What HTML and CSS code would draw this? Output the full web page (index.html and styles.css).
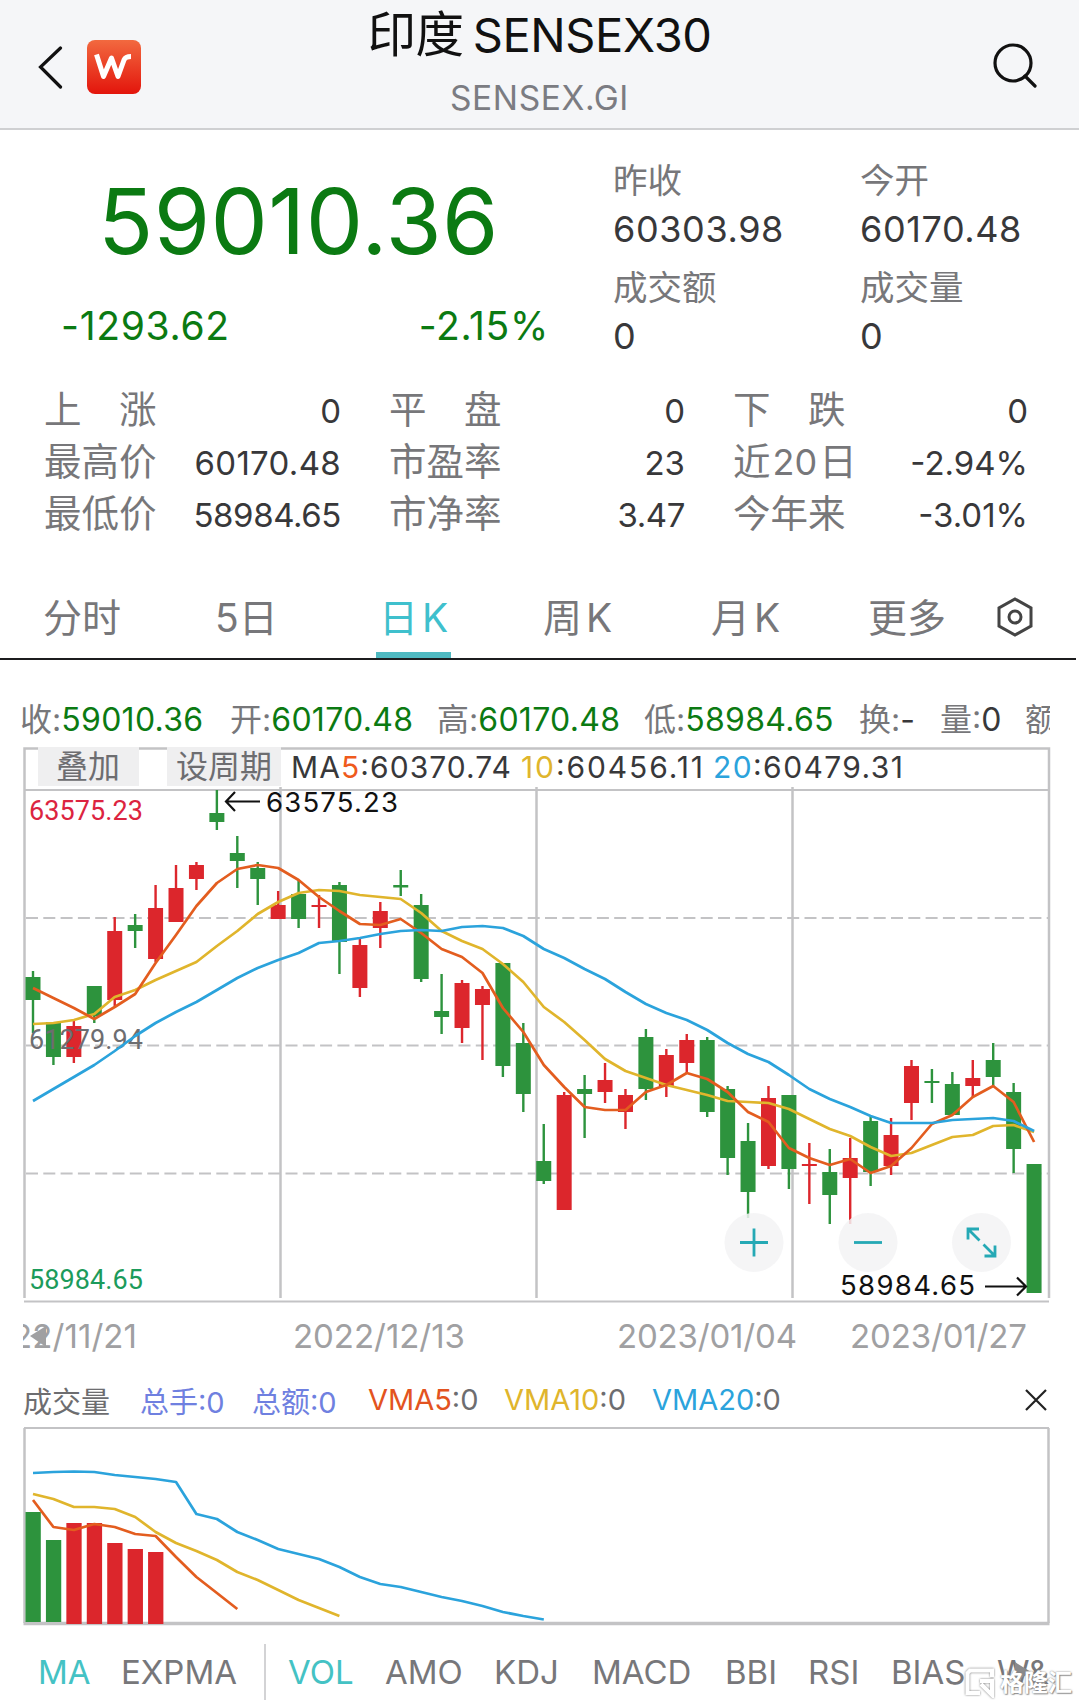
FILE: index.html
```
<!DOCTYPE html>
<html lang="zh-CN">

<head>
    <meta charset="UTF-8" />
    <meta name="viewport" content="width=device-width, initial-scale=1.0" />
    <title>印度SENSEX30</title>
    <link rel="stylesheet" href="styles.css">
</head>

<body>
    <header class="header">
        <div class="header-left">
            <svg class="back" width="26" height="44" viewBox="0 0 26 44">
                <path d="M22.500 3 L2.500 22 L22.500 42" />
            </svg>
            <svg class="logo" width="56" height="56" viewBox="0 0 56 56">
                <defs>
                    <linearGradient id="logo-bg" x1="0" y1="0" x2="0" y2="1">
                        <stop offset="0" stop-color="#f2693f" />
                        <stop offset="1" stop-color="#e3150c" />
                    </linearGradient>
                </defs>
                <rect x="1" y="1" width="54" height="54" rx="8" fill="url(#logo-bg)" />
                <path class="logo-mark" d="M10.500 15.500 L17.500 37.500 L25.500 19 L32 37.500 L38 21 Q39.500 17.500 45 17.500" />
            </svg>
        </div>
        <div class="header-title">
            <h1><span class="cjk">印度</span>SENSEX30</h1>
            <p>SENSEX.GI</p>
        </div>
        <svg class="search" width="46" height="46" viewBox="0 0 46 46">
            <circle cx="21" cy="21" r="18" />
            <path d="M33 34 L43 44" />
        </svg>
    </header>

    <section class="quote">
        <div class="quote-main">
            <div class="price">59010.36</div>
            <div class="change"><span>-1293.62</span><span>-2.15%</span></div>
        </div>
        <dl class="quote-side">
            <div><dt>昨收</dt><dd>60303.98</dd></div>
            <div><dt>今开</dt><dd>60170.48</dd></div>
            <div><dt>成交额</dt><dd>0</dd></div>
            <div><dt>成交量</dt><dd>0</dd></div>
        </dl>
    </section>

    <section class="stats">
        <div class="stat"><span>上　涨</span><b>0</b></div>
        <div class="stat"><span>平　盘</span><b>0</b></div>
        <div class="stat"><span>下　跌</span><b>0</b></div>
        <div class="stat"><span>最高价</span><b class="loose">60170.48</b></div>
        <div class="stat"><span>市盈率</span><b>23</b></div>
        <div class="stat"><span>近<i>20</i>日</span><b>-2.94%</b></div>
        <div class="stat"><span>最低价</span><b class="tight">58984.65</b></div>
        <div class="stat"><span>市净率</span><b class="tight">3.47</b></div>
        <div class="stat"><span>今年来</span><b>-3.01%</b></div>
    </section>

    <nav class="tabs">
        <span>分时</span>
        <span>5日</span>
        <span class="active">日<i>K</i></span>
        <span>周<i>K</i></span>
        <span>月<i>K</i></span>
        <span>更多</span>
        <svg width="36" height="40" viewBox="0 0 36 40">
            <path d="M18 2 L34 11 V29 L18 38 L2 29 V11 Z" />
            <circle cx="18" cy="20" r="6" />
        </svg>
    </nav>

    <div class="ohlc">
        <span>收:<b>59010.36</b></span>
        <span>开:<b>60170.48</b></span>
        <span>高:<b>60170.48</b></span>
        <span>低:<b>58984.65</b></span>
        <span>换:<em>-</em></span>
        <span>量:<em>0</em></span>
        <span>额</span>
    </div>

    <svg class="chart" width="1079" height="630" viewBox="0 740 1079 630">
        <defs>
            <clipPath id="date-clip"><rect x="23" y="1310" width="1027" height="50" /></clipPath>
        </defs>
        <!-- grid -->
        <g class="grid">
            <path class="thick" d="M24.500 1298 V748.500 H1049 V1298 M280.500 787 V1298 M536.500 787 V1298 M792.500 787 V1298" />
            <path d="M24 790 H1049 M24 1301.500 H1049" />
            <path class="dashed" d="M26 918 H1048 M26 1045.500 H1048 M26 1173.500 H1048" />
        </g>
        <rect class="chip" x="38" y="747" width="101" height="39" />
        <rect class="chip" x="167" y="747" width="114" height="39" />
        <text class="chip-text" x="56" y="778">叠加</text>
        <text class="chip-text" x="176" y="778">设周期</text>
        <text class="ma-text" x="291" y="778" textLength="220">MA<tspan class="c5">5</tspan>:60370.74</text>
        <text class="ma-text" x="521" y="778" textLength="182"><tspan class="c10">10</tspan>:60456.11</text>
        <text class="ma-text" x="713" y="778" textLength="190"><tspan class="c20">20</tspan>:60479.31</text>

        <g id="candles"></g>
        <text class="axis up" x="29" y="820" textLength="114">63575.23</text>
        <text class="axis mid" x="29" y="1049" textLength="114">61279.94</text>
        <text class="axis down" x="29" y="1289" textLength="114">58984.65</text>
        <g id="ma-lines" class="lines"></g>

        <text class="mark" x="266" y="812" textLength="132">63575.23</text>
        <path class="arrow" d="M260 801.500 H226 M235 792 L226 801.500 L235 811" />

        <!-- zoom buttons -->
        <g class="zoom-btn">
            <circle cx="754" cy="1242.500" r="29.500" />
            <path d="M740 1242.500 H768 M754 1228.500 V1256.500" />
        </g>
        <g class="zoom-btn">
            <circle cx="868" cy="1242.500" r="29.500" />
            <path d="M854 1242.500 H882" />
        </g>
        <g class="zoom-btn">
            <circle cx="981.500" cy="1242.500" r="29.500" />
            <path d="M968 1239.500 V1229 H979 M968 1229 L979.500 1240.500 M995 1245.500 V1256 H984.500 M995 1256 L983.500 1244.500" />
        </g>
        <text class="mark" x="840" y="1295" textLength="135">58984.65</text>
        <path class="arrow" d="M985 1286.500 H1026 M1017 1277.500 L1026 1286.500 L1017 1295.500" />

        <g class="dates" clip-path="url(#date-clip)">
            <text x="-29" y="1348" textLength="166">2022/11/21</text>
            <text x="293" y="1348" textLength="172">2022/12/13</text>
            <text x="617" y="1348" textLength="180">2023/01/04</text>
            <text x="850" y="1348" textLength="177">2023/01/27</text>
            <path d="M30 1336 L46 1326 V1347 Z" />
        </g>
    </svg>

    <div class="vol-head">
        <span>成交量</span>
        <span class="total">总手:0</span>
        <span class="total">总额:0</span>
        <span><b class="c5">VMA5</b>:0</span>
        <span><b class="c10">VMA10</b>:0</span>
        <span><b class="c20">VMA20</b>:0</span>
        <svg width="22" height="22" viewBox="0 0 22 22">
            <path d="M1 1 L21 21 M21 1 L1 21" />
        </svg>
    </div>

    <svg class="chart" width="1079" height="204" viewBox="0 1424 1079 204">
        <g class="grid">
            <path d="M24 1428 H1049" />
            <path class="thick" d="M24.500 1428 V1623 M1048.500 1428 V1623" />
            <path class="base" d="M23.500 1623.500 H1049.500" />
        </g>
        <g id="volumes"></g>
        <g id="vma-lines" class="lines"></g>
    </svg>

    <footer class="indicators">
        <span class="active">MA</span>
        <span>EXPMA</span>
        <span class="divider"></span>
        <span class="active">VOL</span>
        <span>AMO</span>
        <span>KDJ</span>
        <span>MACD</span>
        <span>BBI</span>
        <span>RSI</span>
        <span>BIAS</span>
        <span>W&amp;</span>
        <svg class="more" width="18" height="22" viewBox="0 0 18 22">
            <path d="M1 1 L17 11 L1 21 Z" />
        </svg>
        <div class="watermark">
            <svg width="30" height="30" viewBox="0 0 30 30">
                <path d="M27 9 V2.500 H5 L2.500 5 V25 H15 M15 13 H27 V27 L16 16" />
            </svg>
            <span>格隆汇</span>
        </div>
    </footer>

    <script>
        const NS = 'http://www.w3.org/2000/svg';
        const STEP = 20.43;
        const RED = '#dc262c';
        const GREEN = '#2d933d';

        // [colour, high, body top, body bottom, low]
        const candles = [
            ['g', 971, 977, 1000, 1033], ['g', 1022, 1022, 1057, 1065], ['r', 1021, 1026, 1057, 1063],
            ['g', 986, 986, 1016, 1023], ['r', 917, 931, 1000, 1006], ['g', 914, 925, 931, 948],
            ['r', 885, 908, 959, 962], ['r', 865, 888, 922, 922], ['r', 862, 865, 879, 890],
            ['g', 790, 813, 822, 830], ['g', 836, 853, 861, 888], ['g', 862, 868, 879, 905],
            ['r', 891, 905, 919, 919], ['g', 880, 894, 919, 928], ['r', 895, 905, 907, 928],
            ['g', 882, 885, 942, 974], ['r', 938, 945, 988, 997], ['r', 902, 911, 928, 948],
            ['g', 870, 885, 887.5, 896], ['g', 894, 905, 979, 982], ['g', 974, 1011, 1017, 1034],
            ['r', 980, 983, 1028, 1043], ['r', 986, 989, 1005, 1060], ['g', 963, 963, 1066, 1077],
            ['g', 1023, 1043, 1094, 1112], ['g', 1124, 1161, 1181, 1184], ['r', 1092, 1095, 1210, 1210],
            ['g', 1075, 1089, 1094, 1138], ['r', 1063, 1080, 1092, 1103], ['r', 1089, 1095, 1112, 1129],
            ['g', 1029, 1037, 1089, 1100], ['r', 1049, 1055, 1086, 1097], ['r', 1034, 1040, 1063, 1073],
            ['g', 1037, 1040, 1112, 1117], ['g', 1086, 1089, 1158, 1175], ['g', 1123, 1141, 1192, 1218],
            ['r', 1086, 1098, 1166, 1169], ['g', 1095, 1095, 1169, 1189], ['r', 1143, 1164, 1166, 1204],
            ['g', 1149, 1172, 1195, 1224], ['r', 1138, 1158, 1178, 1224], ['g', 1117, 1121, 1172, 1186],
            ['r', 1118, 1135, 1166, 1175], ['r', 1060, 1066, 1103, 1120], ['g', 1069, 1081, 1083, 1103],
            ['g', 1072, 1084, 1115, 1115], ['r', 1060, 1078, 1086, 1097], ['g', 1043, 1060, 1077, 1086],
            ['g', 1083, 1092, 1149, 1173], ['g', 1164, 1164, 1293, 1293]
        ];

        const ma20 = [1101, 1089, 1077, 1065, 1051, 1036, 1023, 1012, 1002, 990, 978, 968, 960, 953, 943, 941, 938, 934, 931, 930, 931, 927, 926, 928, 936, 949, 958, 969, 979, 992, 1004, 1013, 1020, 1030, 1043, 1054, 1062, 1075, 1089, 1099, 1107, 1116, 1123, 1123, 1123, 1120, 1119, 1118, 1121, 1131];
        const ma10 = [1024, 1023, 1020, 1014, 997, 990, 980, 971, 962, 946, 931, 914, 902, 893, 890, 891, 895, 897, 899, 913, 931, 941, 949, 964, 982, 1007, 1022, 1040, 1059, 1071, 1078, 1085, 1090, 1095, 1101, 1102, 1103, 1109, 1119, 1129, 1136, 1147, 1156, 1153, 1145, 1137, 1135, 1126, 1125, 1132];
        const ma5 = [988, 998, 1008, 1019, 1007, 994, 963, 935, 906, 883, 869, 865, 868, 880, 897, 911, 924, 925, 919, 933, 949, 957, 973, 1008, 1032, 1065, 1087, 1107, 1110, 1110, 1092, 1085, 1073, 1079, 1092, 1112, 1122, 1148, 1158, 1165, 1159, 1173, 1166, 1148, 1124, 1115, 1097, 1086, 1102, 1142];

        const volumes = [['g', 1512], ['g', 1540], ['r', 1523], ['r', 1523], ['r', 1543], ['r', 1549], ['r', 1552]];
        const vma20 = [1473, 1472, 1471.5, 1472, 1475, 1477, 1479, 1482, 1514, 1519, 1532, 1540, 1549, 1554, 1559, 1567, 1577, 1584, 1587, 1592, 1597, 1601, 1606, 1612, 1616, 1619.5];
        const vma10 = [1494, 1499, 1507, 1507, 1509, 1517, 1532, 1543, 1551, 1560, 1572, 1580, 1590, 1600, 1608, 1616];
        const vma5 = [1500, 1527, 1530, 1524, 1527, 1534, 1536, 1557, 1577, 1593, 1609];

        function xAt(i) {
            return 33 + i * STEP;
        }

        function add(parent, tag, attrs) {
            const el = document.createElementNS(NS, tag);
            for (const key in attrs) el.setAttribute(key, attrs[key]);
            document.getElementById(parent).appendChild(el);
        }

        function line(parent, data, color) {
            const points = data.map((y, i) => xAt(i).toFixed(1) + ',' + y).join(' ');
            add(parent, 'polyline', { points: points, stroke: color });
        }

        candles.forEach(([c, high, top, bottom, low], i) => {
            const fill = c === 'r' ? RED : GREEN;
            add('candles', 'rect', { x: xAt(i) - 1.2, y: high, width: 2.4, height: low - high, fill: fill });
            add('candles', 'rect', { x: xAt(i) - 7.5, y: top, width: 15, height: bottom - top, fill: fill });
        });
        line('ma-lines', ma10, '#e0b52c');
        line('ma-lines', ma5, '#e35d1f');
        line('ma-lines', ma20, '#2ba3dc');

        volumes.forEach(([c, top], i) => {
            const bottom = c === 'r' ? 1624 : 1622;
            add('volumes', 'rect', { x: xAt(i) - 7.5, y: top, width: 15.3, height: bottom - top, fill: c === 'r' ? RED : GREEN });
        });
        line('vma-lines', vma20, '#2ba3dc');
        line('vma-lines', vma10, '#e0b52c');
        line('vma-lines', vma5, '#e35d1f');
    </script>
</body>

</html>
```
FILE: styles.css
```
* {
    box-sizing: border-box;
}

body {
    margin: 0;
    width: 1079px;
    height: 1708px;
    overflow: hidden;
    background: #fff;
    font-family: Inter, "Noto Sans CJK SC", sans-serif;
    font-weight: 400;
    color: #38383a;
}

h1, p, dl, dd {
    margin: 0;
}

b, i, em {
    font-weight: inherit;
    font-style: normal;
}

svg {
    display: block;
    fill: none;
}

/* header */
.header {
    display: grid;
    grid-template-columns: 200px 1fr 200px;
    height: 130px;
    background: #f5f6f8;
    border-bottom: 2px solid #cfd0d2;
}

.header-left {
    display: flex;
    align-items: center;
    gap: 22px;
    padding: 5px 0 0 38px;
}

.back path,
.search circle,
.search path {
    stroke: #111;
    stroke-width: 3.2;
    stroke-linecap: round;
}

.logo-mark {
    stroke: #fff;
    stroke-width: 5;
    stroke-linejoin: round;
}

.header-title {
    text-align: center;
    white-space: nowrap;
}

.header-title h1 {
    padding-top: 5px;
    font-size: 47px;
    font-weight: 400;
    line-height: 60px;
    letter-spacing: -0.4px;
    color: #111;
}

.header-title .cjk {
    margin-right: 9px;
    font-size: 48.5px;
}

.header-title p {
    padding-top: 13px;
    font-size: 33.5px;
    line-height: 40px;
    letter-spacing: 0.6px;
    color: #7b7c82;
}

.search {
    justify-self: end;
    margin: 42px 41px 0 0;
}

/* quote */
.quote {
    display: grid;
    grid-template-columns: 613px 1fr;
    height: 252px;
}

.price {
    padding: 36px 0 0 98px;
    font-size: 91px;
    line-height: 110px;
    letter-spacing: 0.4px;
    color: #0b7a12;
}

.change {
    display: flex;
    justify-content: space-between;
    padding: 26px 64px 0 61px;
    font-size: 39px;
    line-height: 48px;
    letter-spacing: 0.7px;
    color: #0b7a12;
}

.quote-side {
    display: grid;
    grid-template-columns: 247px 1fr;
    grid-template-rows: 107px 107px;
    padding-top: 28px;
}

.quote-side dt {
    font-size: 34.5px;
    line-height: 46px;
    color: #77777a;
}

.quote-side dd {
    font-size: 36px;
    line-height: 51px;
    letter-spacing: 0.6px;
}

/* stats */
.stats {
    display: grid;
    grid-template-columns: 297px 296px 295px;
    column-gap: 48px;
    grid-auto-rows: 52px;
    height: 190px;
    padding: 2px 0 0 44px;
}

.stat {
    display: flex;
    justify-content: space-between;
    line-height: 52px;
    white-space: nowrap;
}

.stat span {
    font-size: 37.5px;
    color: #77777a;
}

.stat span i {
    margin: 0 2px;
    font-size: 36px;
}

.stat b {
    padding-top: 1px;
    font-size: 33px;
}

.stat .loose {
    letter-spacing: 0.3px;
}

.stat .tight {
    letter-spacing: -0.4px;
}

/* period tabs */
.tabs {
    display: grid;
    grid-template-columns: 172px 161px 167px 168px 157px 130px 1fr;
    width: 1076px;
    height: 88px;
    padding-left: 43px;
    border-bottom: 2px solid #1c1c1e;
    font-size: 39px;
    line-height: 91px;
    white-space: nowrap;
    color: #77777a;
}

.tabs i {
    margin-left: 4px;
}

.tabs .active {
    justify-self: start;
    padding-left: 3px;
    width: 75px;
    height: 86px;
    border-bottom: 6px solid #4fb9c1;
    color: #3fc0cd;
}

.tabs svg {
    margin: 25px 0 0 -1px;
    stroke: #444;
    stroke-width: 3;
}

/* open / high / low / close */
.ohlc {
    display: grid;
    grid-template-columns: 210px 207px 207px 215px 81px 85px 1fr;
    height: 80px;
    width: 1050px;
    padding: 31px 0 0 20px;
    overflow: hidden;
    font-size: 32px;
    line-height: 58px;
    white-space: nowrap;
    color: #77777a;
}

.ohlc b {
    letter-spacing: 0.3px;
    color: #0b7a12;
}

.ohlc em {
    color: #38383a;
}

/* charts */
.grid path {
    stroke: #c3c3c5;
    stroke-width: 1.8;
}

.grid .thick {
    stroke-width: 2.5;
}

.grid .base {
    stroke-width: 3.5;
}

.grid .dashed {
    stroke-dasharray: 12 5.300;
}

.chip {
    fill: #efeff0;
}

.chip-text {
    font-size: 32px;
    fill: #6d6d70;
}

.ma-text {
    font-size: 30px;
    fill: #38383a;
}

.c5 {
    fill: #ef5a1c;
    color: #e35320;
}

.c10 {
    fill: #e0b52c;
    color: #e0b52c;
}

.c20 {
    fill: #2ba3dc;
    color: #2ba3dc;
}

.axis {
    font-family: Roboto, sans-serif;
    font-size: 27px;
    font-weight: 400;
}

.up {
    fill: #dc2440;
}

.mid {
    fill: #6d6d70;
}

.down {
    fill: #1c9b5b;
}

.mark {
    font-size: 27.5px;
    fill: #111;
}

.arrow {
    stroke: #111;
    stroke-width: 2.2;
}

.lines {
    stroke-width: 2.7;
    stroke-linejoin: round;
}

.zoom-btn circle {
    fill: #f3f3f5;
    fill-opacity: 0.85;
}

.zoom-btn path {
    stroke: #25a9b5;
    stroke-width: 2.8;
}

.dates {
    font-size: 33px;
    fill: #a0a0a2;
}

/* volume */
.vol-head {
    display: grid;
    grid-template-columns: 117px 112px 116px 136px 148px 373px 1fr;
    align-items: center;
    height: 54px;
    padding: 5px 0 0 23px;
    font-size: 29px;
    white-space: nowrap;
    color: #6d6d70;
}

.vol-head .total {
    color: #6f80e0;
}

.vol-head svg {
    stroke: #222;
    stroke-width: 2.2;
}

/* indicator tabs */
.indicators {
    position: relative;
    display: grid;
    grid-template-columns: 83px 143px 24px 97px 109px 98px 133px 83px 83px 106px 50px;
    align-items: center;
    height: 80px;
    margin-top: 4px;
    padding-left: 38px;
    font-size: 33px;
    line-height: 56px;
    color: #77777a;
}

.indicators .active {
    color: #44c2c4;
}

.divider {
    width: 2px;
    height: 56px;
    background: #d3d3d5;
}

.more {
    position: absolute;
    left: 1014px;
    top: 29px;
    fill: #8a8a8c;
}

.watermark {
    position: absolute;
    left: 965px;
    top: 36px;
    display: flex;
    gap: 5px;
    align-items: center;
    font-size: 24px;
    font-weight: 700;
    line-height: 30px;
    color: #fff;
    text-shadow: 0 0 2px #777, 1px 1px 1px #999;
}

.watermark svg {
    stroke: #fff;
    stroke-width: 4;
    filter: drop-shadow(0 0 1px #777);
}
```
